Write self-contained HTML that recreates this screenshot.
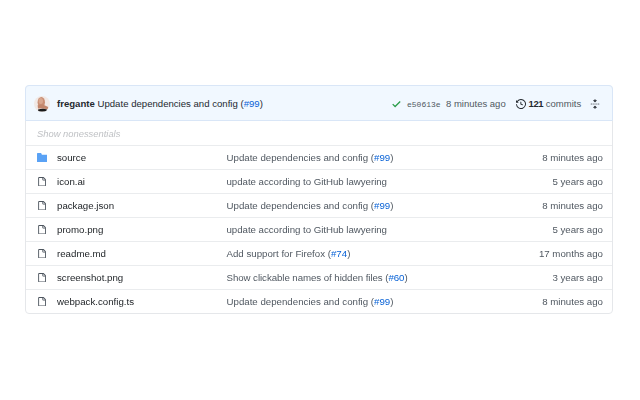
<!DOCTYPE html>
<html><head><meta charset="utf-8">
<style>
*{margin:0;padding:0;box-sizing:border-box}
html,body{width:640px;height:400px;background:#fff;overflow:hidden;font-family:"Liberation Sans",sans-serif;font-size:9.7px;color:#24292f}
.box{position:absolute;left:25px;top:85px;width:588px;height:229px;border:1px solid #e5e7ea;border-radius:4px}
.hdr{position:absolute;left:-1px;top:-1px;right:-1px;height:36px;background:#f1f8ff;border:1px solid #d9e6f7;border-radius:4px 4px 0 0}
.t{position:absolute;white-space:nowrap;line-height:11px}
.av{position:absolute;left:8px;top:10px;width:16px;height:16px;border-radius:50%;background:#f1e9e6;overflow:hidden}
.row{position:absolute;left:0;right:0;height:24px;border-top:1px solid #eaecee}
.ic{position:absolute;left:10.8px;top:6.75px}
.fo{left:10.75px;top:6.75px}
.nm{left:31px;top:6px;color:#1b1f23}
.msg{left:200.5px;top:6px}
.age{right:9px;top:6px}
.a{color:#0862d6}
.g{color:#505861}
.box{filter:blur(0.3px)}
</style></head><body>
<div class="box">
  <div class="hdr">
    <div class="av">
      <svg width="16" height="16" viewBox="0 0 16 16"><ellipse cx="7.3" cy="6.3" rx="3.7" ry="5.2" fill="#c98e74"/><ellipse cx="6.8" cy="5" rx="2.2" ry="3" fill="#d9a78f"/><path d="M3.6 9.2 L8.8 8.4 L14.2 11 L13.6 13.2 L8 12.6 L4 12.4Z" fill="#c2866c"/><path d="M4 13.6 Q8.5 12.2 13 13.4 L12.6 15.2 Q8.5 16 4.4 15.2Z" fill="#1a1a1a"/></svg>
    </div>
    <div class="t" style="left:31px;top:12px;font-size:9.6px"><b style="font-weight:bold">fregante</b> Update dependencies and config (<span class="a">#99</span>)</div>
    <svg style="position:absolute;left:365.8px;top:14.6px" width="9" height="7" viewBox="0 0 9 7"><path d="M0.7 3.1 L3.1 5.5 L8.2 0.5" fill="none" stroke="#2a9d4a" stroke-width="1.25"/></svg>
    <div class="t g" style="left:381px;top:13px;font-family:'Liberation Mono',monospace;font-size:8px">e50613e</div>
    <div class="t g" style="left:420px;top:12px;font-size:9.5px">8 minutes ago</div>
    <svg style="position:absolute;left:489.9px;top:12.7px" width="10" height="10" viewBox="0 0 16 16"><path fill="#24292f" d="M1.643 3.143 .427 1.927A.25.25 0 0 0 0 2.104V5.75c0 .138.112.25.25.25h3.646a.25.25 0 0 0 .177-.427L2.715 4.215a6.5 6.5 0 1 1-1.18 4.458.75.75 0 1 0-1.493.154 8.001 8.001 0 1 0 1.6-5.684ZM7.750 4a.75.75 0 0 1 .75.75v2.992l2.028.812a.75.75 0 0 1-.557 1.392l-2.5-1A.751.751 0 0 1 7 8.25v-3.5A.75.75 0 0 1 7.75 4Z"/></svg>
    <div class="t" style="left:502.5px;top:12px;font-size:9.5px"><b style="letter-spacing:-0.4px">121</b> <span class="g">commits</span></div>
    <svg style="position:absolute;left:564px;top:13px" width="10" height="10" viewBox="0 0 16 16"><path fill="#24292f" d="M10.896 2H8.75V.75a.75.75 0 0 0-1.5 0V2H5.104a.25.25 0 0 0-.177.427l2.896 2.896a.25.25 0 0 0 .354 0l2.896-2.896A.25.25 0 0 0 10.896 2ZM8.75 15.250a.75.75 0 0 1-1.5 0V14H5.104a.25.25 0 0 1-.177-.427l2.896-2.896a.25.25 0 0 1 .354 0l2.896 2.896a.25.25 0 0 1-.177.427H8.75v1.25Zm-6.5-6.5a.75.75 0 0 0 0-1.5h-.5a.75.75 0 0 0 0 1.5h.5ZM6 8a.75.75 0 0 1-.75.75h-.5a.75.75 0 0 1 0-1.5h.5A.75.75 0 0 1 6 8Zm2.25.75a.75.75 0 0 0 0-1.5h-.5a.75.75 0 0 0 0 1.5h.5ZM12 8a.75.75 0 0 1-.75.75h-.5a.75.75 0 0 1 0-1.5h.5A.75.75 0 0 1 12 8Zm2.25.75a.75.75 0 0 0 0-1.5h-.5a.75.75 0 0 0 0 1.5h.5Z"/></svg>
  </div>
  <div class="t" style="left:11px;top:42px;font-style:italic;color:#bfc1c4;font-size:9.4px">Show nonessentials</div>

  <div class="row" style="top:59px">
    <svg class="ic fo" width="10.25" height="9.25" viewBox="0 0 10 9"><path fill="#5aa2f5" d="M0 .6Q0 0 .6 0H4L4.8 1.7H9.4Q10 1.7 10 2.3V8.4Q10 9 9.4 9H.6Q0 9 0 8.4Z"/></svg>
    <div class="t nm">source</div>
    <div class="t g msg">Update dependencies and config (<span class="a">#99</span>)</div>
    <div class="t g age">8 minutes ago</div>
  </div>
  <div class="row" style="top:83px">
    <svg class="ic" width="9.5" height="9.5" viewBox="0 0 16 16"><path fill="#4d555e" d="M2 1.75C2 .784 2.784 0 3.75 0h6.586c.464 0 .909.184 1.237.513l2.914 2.914c.329.328.513.773.513 1.237v9.586A1.75 1.75 0 0 1 13.25 16h-9.5A1.75 1.75 0 0 1 2 14.25Zm1.75-.25a.25.25 0 0 0-.25.25v12.5c0 .138.112.25.25.25h9.5a.25.25 0 0 0 .25-.25V6h-2.75A1.75 1.75 0 0 1 9 4.25V1.5Zm6.75.062V4.25c0 .138.112.25.25.25h2.688l-.011-.013-2.914-2.914-.013-.011Z"/></svg>
    <div class="t nm">icon.ai</div>
    <div class="t g msg" style="letter-spacing:-0.03px">update according to GitHub lawyering</div>
    <div class="t g age">5 years ago</div>
  </div>
  <div class="row" style="top:107px">
    <svg class="ic" width="9.5" height="9.5" viewBox="0 0 16 16"><path fill="#4d555e" d="M2 1.75C2 .784 2.784 0 3.75 0h6.586c.464 0 .909.184 1.237.513l2.914 2.914c.329.328.513.773.513 1.237v9.586A1.75 1.75 0 0 1 13.25 16h-9.5A1.75 1.75 0 0 1 2 14.25Zm1.75-.25a.25.25 0 0 0-.25.25v12.5c0 .138.112.25.25.25h9.5a.25.25 0 0 0 .25-.25V6h-2.75A1.75 1.75 0 0 1 9 4.25V1.5Zm6.75.062V4.25c0 .138.112.25.25.25h2.688l-.011-.013-2.914-2.914-.013-.011Z"/></svg>
    <div class="t nm">package.json</div>
    <div class="t g msg">Update dependencies and config (<span class="a">#99</span>)</div>
    <div class="t g age">8 minutes ago</div>
  </div>
  <div class="row" style="top:131px">
    <svg class="ic" width="9.5" height="9.5" viewBox="0 0 16 16"><path fill="#4d555e" d="M2 1.75C2 .784 2.784 0 3.75 0h6.586c.464 0 .909.184 1.237.513l2.914 2.914c.329.328.513.773.513 1.237v9.586A1.75 1.75 0 0 1 13.25 16h-9.5A1.75 1.75 0 0 1 2 14.25Zm1.75-.25a.25.25 0 0 0-.25.25v12.5c0 .138.112.25.25.25h9.5a.25.25 0 0 0 .25-.25V6h-2.75A1.75 1.75 0 0 1 9 4.25V1.5Zm6.75.062V4.25c0 .138.112.25.25.25h2.688l-.011-.013-2.914-2.914-.013-.011Z"/></svg>
    <div class="t nm">promo.png</div>
    <div class="t g msg" style="letter-spacing:-0.03px">update according to GitHub lawyering</div>
    <div class="t g age">5 years ago</div>
  </div>
  <div class="row" style="top:155px">
    <svg class="ic" width="9.5" height="9.5" viewBox="0 0 16 16"><path fill="#4d555e" d="M2 1.75C2 .784 2.784 0 3.75 0h6.586c.464 0 .909.184 1.237.513l2.914 2.914c.329.328.513.773.513 1.237v9.586A1.75 1.75 0 0 1 13.25 16h-9.5A1.75 1.75 0 0 1 2 14.25Zm1.75-.25a.25.25 0 0 0-.25.25v12.5c0 .138.112.25.25.25h9.5a.25.25 0 0 0 .25-.25V6h-2.75A1.75 1.75 0 0 1 9 4.25V1.5Zm6.75.062V4.25c0 .138.112.25.25.25h2.688l-.011-.013-2.914-2.914-.013-.011Z"/></svg>
    <div class="t nm">readme.md</div>
    <div class="t g msg">Add support for Firefox (<span class="a">#74</span>)</div>
    <div class="t g age">17 months ago</div>
  </div>
  <div class="row" style="top:179px">
    <svg class="ic" width="9.5" height="9.5" viewBox="0 0 16 16"><path fill="#4d555e" d="M2 1.75C2 .784 2.784 0 3.75 0h6.586c.464 0 .909.184 1.237.513l2.914 2.914c.329.328.513.773.513 1.237v9.586A1.75 1.75 0 0 1 13.25 16h-9.5A1.75 1.75 0 0 1 2 14.25Zm1.75-.25a.25.25 0 0 0-.25.25v12.5c0 .138.112.25.25.25h9.5a.25.25 0 0 0 .25-.25V6h-2.75A1.75 1.75 0 0 1 9 4.25V1.5Zm6.75.062V4.25c0 .138.112.25.25.25h2.688l-.011-.013-2.914-2.914-.013-.011Z"/></svg>
    <div class="t nm">screenshot.png</div>
    <div class="t g msg" style="letter-spacing:-0.06px">Show clickable names of hidden files (<span class="a">#60</span>)</div>
    <div class="t g age">3 years ago</div>
  </div>
  <div class="row" style="top:203px">
    <svg class="ic" width="9.5" height="9.5" viewBox="0 0 16 16"><path fill="#4d555e" d="M2 1.75C2 .784 2.784 0 3.75 0h6.586c.464 0 .909.184 1.237.513l2.914 2.914c.329.328.513.773.513 1.237v9.586A1.75 1.75 0 0 1 13.25 16h-9.5A1.75 1.75 0 0 1 2 14.25Zm1.75-.25a.25.25 0 0 0-.25.25v12.5c0 .138.112.25.25.25h9.5a.25.25 0 0 0 .25-.25V6h-2.75A1.75 1.75 0 0 1 9 4.25V1.5Zm6.75.062V4.25c0 .138.112.25.25.25h2.688l-.011-.013-2.914-2.914-.013-.011Z"/></svg>
    <div class="t nm">webpack.config.ts</div>
    <div class="t g msg">Update dependencies and config (<span class="a">#99</span>)</div>
    <div class="t g age">8 minutes ago</div>
  </div>
</div>
</body></html>
